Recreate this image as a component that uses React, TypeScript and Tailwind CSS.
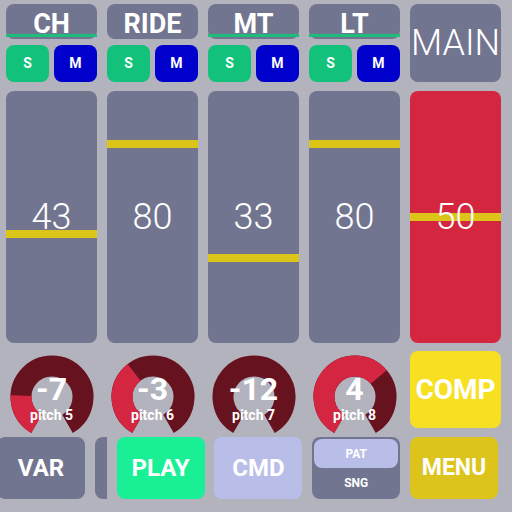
import React from "react";

const CHANNELS = [
  { name: "CH", value: 43, knob: -7, pitch: "pitch 5", bar: true },
  { name: "RIDE", value: 80, knob: -3, pitch: "pitch 6", bar: false },
  { name: "MT", value: 33, knob: -12, pitch: "pitch 7", bar: true },
  { name: "LT", value: 80, knob: 4, pitch: "pitch 8", bar: true },
];

const SLIDER_H = 252;
const LINE_H = 8;

function pt(cx: number, cy: number, r: number, deg: number) {
  const a = (deg * Math.PI) / 180;
  return [cx + r * Math.sin(a), cy - r * Math.cos(a)];
}

function arc(cx: number, cy: number, r: number, a0: number, a1: number) {
  const [x0, y0] = pt(cx, cy, r, a0);
  const [x1, y1] = pt(cx, cy, r, a1);
  const large = a1 - a0 > 180 ? 1 : 0;
  return `M ${x0} ${y0} A ${r} ${r} 0 ${large} 1 ${x1} ${y1}`;
}

function Knob({ value, label }: { value: number; label: string }) {
  const start = 210;
  const span = 300;
  const frac = (value + 12) / 24;
  const end = start + span * frac;
  return (
    <div className="relative flex justify-center h-[77px]">
      <svg width="84" height="84" viewBox="0 0 84 84" className="mt-[4px] overflow-visible">
        <path d={arc(42, 42, 31, start, start + span)} stroke="#67121f" strokeWidth="21" fill="none" />
        {frac > 0 && (
          <path d={arc(42, 42, 31, start, end)} stroke="#d42541" strokeWidth="21" fill="none" />
        )}
      </svg>
      <div className="absolute inset-x-0 top-[22px] text-center text-white font-bold text-[32px] leading-[32px]">
        {value}
      </div>
      <div className="absolute inset-x-0 top-[56px] text-center text-white font-bold text-[14px] leading-[16px]">
        {label}
      </div>
    </div>
  );
}

function Slider({ value, red }: { value: number; red?: boolean }) {
  const top = (1 - value / 100) * (SLIDER_H - LINE_H);
  return (
    <div
      className={`relative h-[252px] rounded-lg flex items-center justify-center overflow-hidden ${
        red ? "bg-[#d4263f]" : "bg-[#727590]"
      }`}
    >
      <div className="absolute inset-x-0 h-[8px] bg-[#dcc419]" style={{ top }} />
      <span className="relative text-white font-light text-[36px] leading-none">{value}</span>
    </div>
  );
}

export default function App() {
  return (
    <div
      className="w-[512px] h-[512px] bg-[#b3b3bd] overflow-hidden"
      style={{ fontFamily: "Roboto, 'Liberation Sans', sans-serif" }}
    >
      <div className="grid grid-cols-[repeat(5,91px)] gap-x-[10px] pl-[6px] pt-[4px]">
        {CHANNELS.map((c) => (
          <div key={c.name} className="flex flex-col h-[78px]">
            <div className="h-[35px] rounded-lg bg-[#727590] flex flex-col">
              <div className="h-[30px] flex items-end justify-center text-white font-bold text-[27px] leading-[20px]">
                {c.name}
              </div>
              {c.bar ? <div className="h-[3px] bg-[#1dbd7b]" /> : <div className="h-[3px]" />}
            </div>
            <div className="mt-[6px] flex gap-[5px] h-[37px]">
              <div className="flex-1 rounded-lg bg-[#13c27a] flex items-center justify-center text-white font-bold text-[14px]">
                S
              </div>
              <div className="flex-1 rounded-lg bg-[#0000cc] flex items-center justify-center text-white font-bold text-[14px]">
                M
              </div>
            </div>
          </div>
        ))}
        <div className="h-[78px] rounded-lg bg-[#727590] flex items-center justify-center text-white font-light text-[36px]">
          MAIN
        </div>

        {CHANNELS.map((c) => (
          <div key={c.name + "s"} className="mt-[9px]">
            <Slider value={c.value} />
          </div>
        ))}
        <div className="mt-[9px]">
          <Slider value={50} red />
        </div>

        {CHANNELS.map((c) => (
          <div key={c.name + "k"} className="mt-[8px]">
            <Knob value={c.knob} label={c.pitch} />
          </div>
        ))}
        <div className="mt-[8px] h-[77px] rounded-lg bg-[#f6e021] flex items-center justify-center text-white font-bold text-[28px]">
          COMP
        </div>
      </div>

      <div className="flex gap-[9.8px] ml-[-3px] mt-[9px] h-[62px]">
        <div className="w-[88px] shrink-0 rounded-lg bg-[#727590] flex items-center justify-center text-white font-bold text-[24px]">
          VAR
        </div>
        <div className="w-[12px] shrink-0 rounded-l-lg bg-[#727590]" />
        <div className="w-[88px] shrink-0 rounded-lg bg-[#19f095] flex items-center justify-center text-white font-bold text-[24px]">
          PLAY
        </div>
        <div className="w-[88px] shrink-0 rounded-lg bg-[#b9bee9] flex items-center justify-center text-white font-bold text-[24px]">
          CMD
        </div>
        <div className="w-[88px] shrink-0 rounded-lg bg-[#727590] flex flex-col p-[2px]">
          <div className="h-[29px] rounded-lg bg-[#b9bee9] flex items-center justify-center text-white font-bold text-[12px]">
            PAT
          </div>
          <div className="flex-1 flex items-center justify-center text-white font-bold text-[12px]">SNG</div>
        </div>
        <div className="w-[88px] shrink-0 rounded-lg bg-[#dcc41d] flex items-center justify-center text-white font-bold text-[23px]">
          MENU
        </div>
      </div>
    </div>
  );
}
